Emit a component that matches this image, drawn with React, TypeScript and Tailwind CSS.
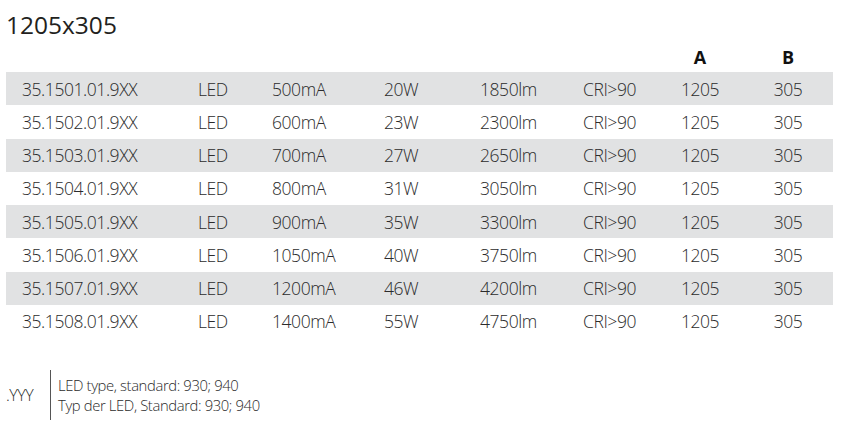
const rows = [
  ['35.1501.01.9XX', 'LED', '500mA', '20W', '1850lm', 'CRI>90', '1205', '305'],
  ['35.1502.01.9XX', 'LED', '600mA', '23W', '2300lm', 'CRI>90', '1205', '305'],
  ['35.1503.01.9XX', 'LED', '700mA', '27W', '2650lm', 'CRI>90', '1205', '305'],
  ['35.1504.01.9XX', 'LED', '800mA', '31W', '3050lm', 'CRI>90', '1205', '305'],
  ['35.1505.01.9XX', 'LED', '900mA', '35W', '3300lm', 'CRI>90', '1205', '305'],
  ['35.1506.01.9XX', 'LED', '1050mA', '40W', '3750lm', 'CRI>90', '1205', '305'],
  ['35.1507.01.9XX', 'LED', '1200mA', '46W', '4200lm', 'CRI>90', '1205', '305'],
  ['35.1508.01.9XX', 'LED', '1400mA', '55W', '4750lm', 'CRI>90', '1205', '305'],
];

const grid =
  'grid grid-cols-[176px_74px_112px_96px_103px_77px_80px_96px] pl-[16px] items-center';

export default function App() {
  return (
    <div className="h-[428px] w-[846px] overflow-hidden bg-white font-['Open_Sans',sans-serif]">
      <h1 className="pl-[6px] pt-[8px] text-[24.5px] leading-[34px] text-[#231f20]">
        1205x305
      </h1>

      <div className={`${grid} h-[30px] w-[827px] ml-[6px] text-[18px] font-bold leading-[24px] text-[#111]`}>
        <span />
        <span />
        <span />
        <span />
        <span />
        <span />
        <span className="text-center">A</span>
        <span className="text-center">B</span>
      </div>

      <div className="ml-[6px] w-[827px]">
        {rows.map((r, i) => (
          <div
            key={r[0]}
            className={`${grid} h-[33.25px] text-[17.5px] font-light tracking-[-0.025em] text-[#2b2b2b] ${
              i % 2 === 0 ? 'bg-[#e1e2e3]' : ''
            }`}
          >
            {r.map((c, j) => (
              <span key={j} className={j >= 6 ? 'text-center' : ''}>
                {c}
              </span>
            ))}
          </div>
        ))}
      </div>

      <div className="mt-[32px] flex items-center pl-[6px] text-[#2b2b2b]">
        <span className="w-[44px] text-[16px] font-light tracking-[-0.03em]">.YYY</span>
        <div className="flex h-[50px] flex-col justify-center border-l border-[#555] pl-[7px] text-[14.8px] font-light leading-[20px] tracking-[-0.025em]">
          <span>LED type, standard: 930; 940</span>
          <span>Typ der LED, Standard: 930; 940</span>
        </div>
      </div>
    </div>
  );
}
